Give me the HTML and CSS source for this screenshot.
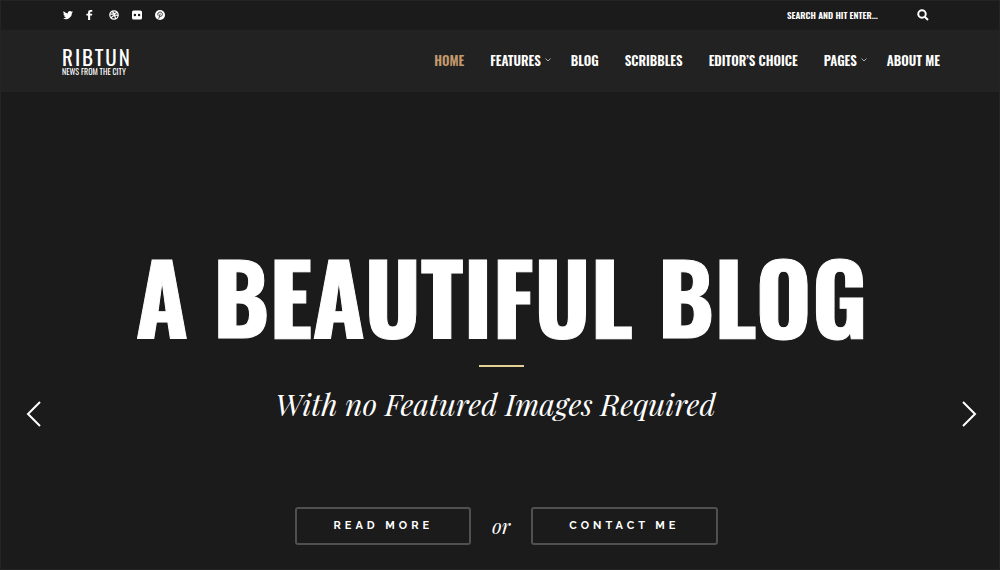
FILE: index.html
```html
<!DOCTYPE html>
<html lang="en">
<head>
<meta charset="utf-8">
<title>Ribtun</title>
<link rel="stylesheet" href="styles.css">
</head>
<body>
<div class="page">
  <div class="topbar">
    <nav class="social" aria-label="Social">
      <a href="#" aria-label="Twitter"><svg viewBox="0 0 24 24"><path d="M24 4.6a10 10 0 0 1-2.8.8 5 5 0 0 0 2.1-2.8 10 10 0 0 1-3.1 1.3 4.9 4.9 0 0 0-8.4 4.5A14 14 0 0 1 1.700 3.200a4.900 4.900 0 0 0 1.500 6.600 5 5 0 0 1-2.200-.6 4.900 4.900 0 0 0 3.900 4.900 5 5 0 0 1-2.200.1 4.900 4.900 0 0 0 4.600 3.400A10 10 0 0 1 0 19.600 14 14 0 0 0 21.500 7.100 10 10 0 0 0 24 4.600z"/></svg></a>
      <a href="#" aria-label="Facebook"><svg viewBox="0 0 24 24"><path d="M5 24V13H1V9h4V6c0-4 2-6 6-6h4v4h-3c-1.500 0-2 .7-2 2v3h5l-.6 4H10v11z"/></svg></a>
      <a href="#" aria-label="Dribbble"><svg viewBox="0 0 24 24" class="line"><circle cx="12" cy="12" r="10"/><path d="M8 3c4 5 7 11 8 18M3 10c7 0 13-1 16-5M5 20c3-7 9-9 17-7"/></svg></a>
      <a href="#" aria-label="Flickr"><svg viewBox="0 0 24 24"><path fill-rule="evenodd" d="M4 1h16a4 4 0 0 1 4 4v14a4 4 0 0 1-4 4H4a4 4 0 0 1-4-4V5a4 4 0 0 1 4-4zm3 8a3 3 0 1 0 0 6 3 3 0 0 0 0-6zm10 0a3 3 0 1 0 0 6 3 3 0 0 0 0-6z"/></svg></a>
      <a href="#" aria-label="Pinterest"><svg viewBox="0 0 24 24"><circle cx="12" cy="12" r="12"/><path class="cut" d="M9 21l3.500-12M7.500 13.500C4.500 8 9 5 12.500 5c4 0 6 3 5 6.500-1 4-4.500 5-6.500 3"/></svg></a>
    </nav>
    <form class="search">
      <input type="text" aria-label="Search" placeholder="SEARCH AND HIT ENTER...">
      <button type="button" aria-label="Search"><svg viewBox="0 0 24 24"><circle cx="10" cy="10" r="7.500"/><path d="M15.500 15.500L22 22"/></svg></button>
    </form>
  </div>
  <header class="header">
    <a class="brand" href="#"><span class="name">RIBTUN</span><span class="tagline">NEWS FROM THE CITY</span></a>
    <nav class="menu" aria-label="Main">
      <a class="active" href="#">HOME</a>
      <a class="parent" href="#">FEATURES<svg viewBox="0 0 6 4"><path d="M.5.5L3 3 5.500.5"/></svg></a>
      <a href="#">BLOG</a>
      <a href="#">SCRIBBLES</a>
      <a href="#">EDITOR’S CHOICE</a>
      <a class="parent" href="#">PAGES<svg viewBox="0 0 6 4"><path d="M.5.5L3 3 5.500.5"/></svg></a>
      <a href="#">ABOUT ME</a>
    </nav>
  </header>
  <main class="hero">
    <button class="arrow" type="button" aria-label="Previous"><svg viewBox="0 0 16 28"><path d="M14 2L2 14l12 12"/></svg></button>
    <div class="slide">
      <h1>A BEAUTIFUL BLOG</h1>
      <hr>
      <p class="subtitle">With no Featured Images Required</p>
      <div class="actions">
        <a class="button" href="#">READ MORE</a>
        <span class="or">or</span>
        <a class="button" href="#">CONTACT ME</a>
      </div>
    </div>
    <button class="arrow" type="button" aria-label="Next"><svg viewBox="0 0 16 28"><path d="M2 2l12 12L2 26"/></svg></button>
  </main>
</div>
</body>
</html>
```
FILE: styles.css
```css
* { box-sizing: border-box; }
body {
  margin: 0;
  background: #1b1b1b;
  color: #fff;
  font-family: Oswald, "Roboto Condensed", "Liberation Sans", sans-serif;
}
a { color: inherit; text-decoration: none; }
button { padding: 0; border: 0; background: none; color: inherit; }
svg { display: block; }
.page {
  display: flex;
  flex-direction: column;
  min-height: 100vh;
  border: 1px solid #242424;
}
.topbar {
  display: flex;
  align-items: center;
  justify-content: space-between;
  height: 29px;
  padding: 0 70px 1px 62px;
}
.social { display: flex; gap: 13px; }
.social svg { width: 10px; height: 10px; fill: #fff; }
.social .line { fill: none; stroke: #fff; stroke-width: 3; }
.social .cut { fill: none; stroke: #1b1b1b; stroke-width: 2; }
.search { display: flex; align-items: center; gap: 10px; }
.search input {
  width: 120px;
  padding: 0;
  border: 0;
  background: none;
  color: #fff;
  font: 600 9px/12px Oswald, "Liberation Sans", sans-serif;
}
.search input::placeholder { color: #fff; opacity: 1; }
.search svg { width: 12px; height: 12px; fill: none; stroke: #fff; stroke-width: 4; }
.header {
  display: flex;
  align-items: center;
  justify-content: space-between;
  height: 62px;
  padding: 0 59px 0 61px;
  background: #222;
}
.brand { display: flex; flex-direction: column; }
.name { font-size: 21px; line-height: 20px; letter-spacing: 2px; }
.tagline { font-size: 8px; line-height: 8px; }
.menu { display: flex; gap: 26px; padding-bottom: 2px; font-size: 13px; line-height: 20px; font-weight: 600; }
.menu a { display: flex; align-items: center; }
.menu .parent { margin-right: -6px; }
.menu svg { width: 6px; height: 4px; margin-left: 4px; fill: none; stroke: #aaa; }
.menu .active { color: #c49a6c; }
.hero {
  flex: 1;
  display: flex;
  align-items: flex-start;
  justify-content: space-between;
  padding: 148px 22px 24px 25px;
}
.arrow { margin-top: 160px; }
.arrow svg { width: 16px; height: 28px; fill: none; stroke: #fff; stroke-width: 2; }
.slide { display: flex; flex-direction: column; align-items: center; }
h1 {
  margin: 0;
  font-size: 96px;
  line-height: 112px;
  font-weight: bold;
  white-space: nowrap;
  -webkit-text-stroke: 1px #fff;
}
hr { width: 45px; height: 2px; margin: 13px 0 0; border: 0; background: #e2cf94; }
.subtitle {
  margin: 15px 0 0;
  padding-right: 12px;
  font: italic 30px/44px "Playfair Display", "Liberation Serif", serif;
}
.actions { display: flex; align-items: center; margin-top: 81px; padding-left: 10px; }
.button {
  padding: 0 36px;
  border: 2px solid #505050;
  border-radius: 3px;
  font: bold 11px/34px Raleway, Lato, sans-serif;
  letter-spacing: 4px;
}
.or { margin: 0 21px; font: italic 20px/24px "Playfair Display", "Liberation Serif", serif; }
```
